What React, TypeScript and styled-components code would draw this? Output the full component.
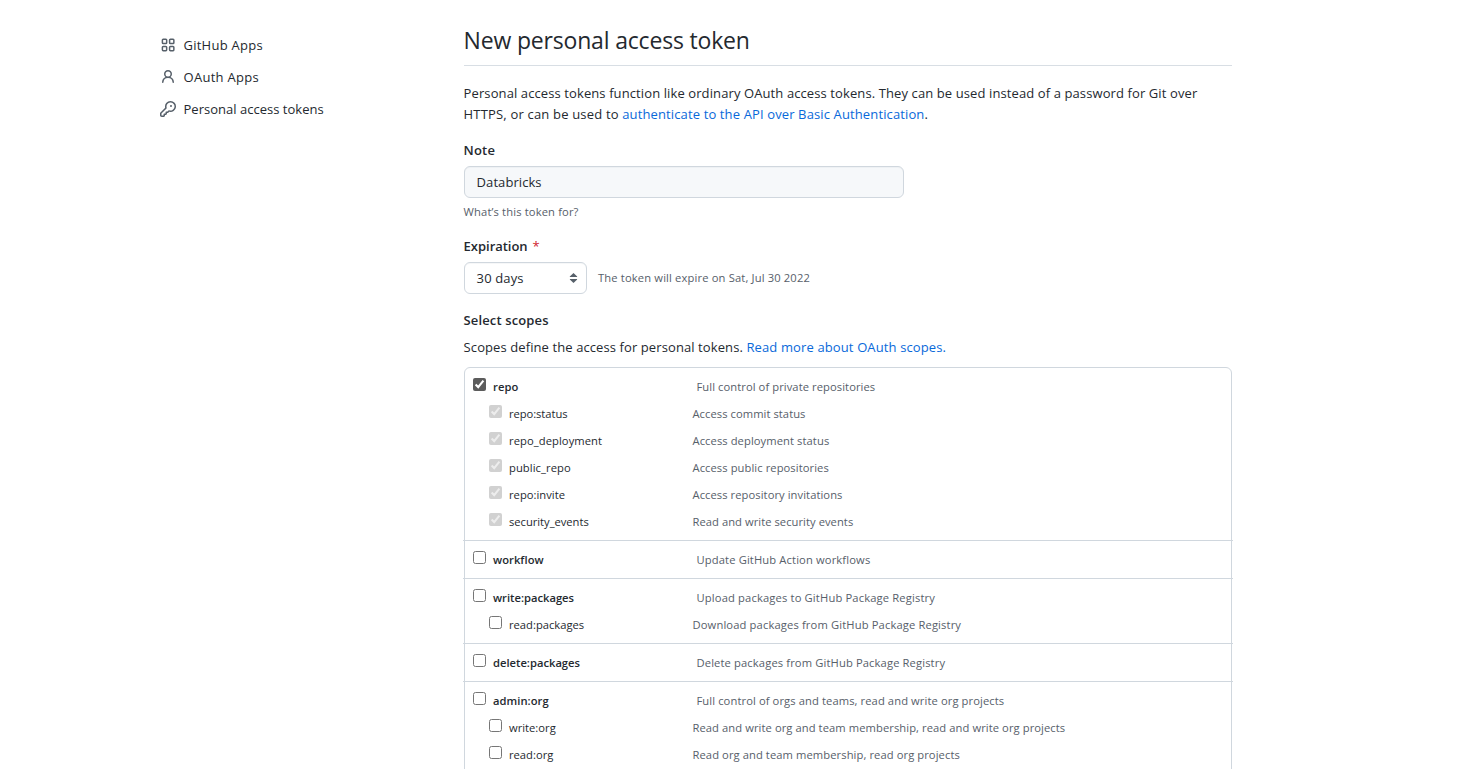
import React from "react";
import styled, { createGlobalStyle } from "styled-components";

const GlobalStyle = createGlobalStyle`
  * { box-sizing: border-box; }
  html, body { margin: 0; overflow: hidden; }
  body {
    background: #fff;
    color: #24292f;
    font-family: "Open Sans", "Noto Sans", sans-serif;
    font-size: 13px;
    line-height: 21px;
  }
`;

const Page = styled.div`
  display: flex;
  height: 769px;
  padding-left: 160px;
  overflow: hidden;
`;

const Sidebar = styled.nav`
  display: flex;
  flex-direction: column;
  width: 303.6px;
  padding-top: 29px;
`;

const NavLink = styled.a`
  display: flex;
  align-items: center;
  gap: 7.5px;
  height: 32px;
  color: #24292f;
  text-decoration: none;
`;

const Icon = styled.svg`
  flex: none;
  width: 16px;
  height: 16px;
  fill: #57606a;
`;

const OutlineIcon = styled(Icon)`
  fill: none;
  stroke: #57606a;
  stroke-width: 1.5px;
`;

const Text = styled.span<{ $track?: number }>`
  letter-spacing: ${(p) => p.$track ?? 0}px;
  white-space: nowrap;
`;

const Main = styled.main`
  width: 768px;
  flex: none;
`;

const Title = styled.h1`
  height: 66px;
  margin: 0 0 17px;
  padding-top: 23px;
  border-bottom: 1px solid #d8dee4;
  font-size: 23px;
  font-weight: 400;
  line-height: 34px;
  letter-spacing: -0.18px;
`;

const Paragraph = styled.p`
  margin: 0;
`;

const Link = styled.a<{ $track?: number }>`
  color: #0969da;
  letter-spacing: ${(p) => p.$track ?? 0}px;
  text-decoration: none;
`;

const Label = styled.label<{ $track?: number; $top: number }>`
  display: block;
  margin-top: ${(p) => p.$top}px;
  font-weight: 600;
  letter-spacing: ${(p) => p.$track ?? 0}px;
`;

const Required = styled.span`
  margin-left: 5px;
  color: #cf222e;
  font-weight: 400;
`;

const Field = styled.input`
  display: block;
  width: 440px;
  height: 32px;
  margin-top: 5px;
  padding: 5px 12px;
  border: 1px solid #d0d7de;
  border-radius: 6px;
  outline: none;
  background: #f6f8fa;
  box-shadow: inset 0 1px 0 rgba(208, 215, 222, 0.2);
  color: #24292f;
  font: inherit;
  line-height: 20px;
  letter-spacing: 0.069px;
`;

const Hint = styled.div<{ $track?: number }>`
  color: #57606a;
  font-size: 11.2px;
  line-height: 18px;
  letter-spacing: ${(p) => p.$track ?? 0}px;
`;

const NoteHint = styled(Hint)`
  margin-top: 5px;
`;

const ExpiryRow = styled.div`
  display: flex;
  align-items: center;
  gap: 11.4px;
  margin-top: 5px;
`;

const Select = styled.button`
  display: flex;
  align-items: center;
  justify-content: space-between;
  width: 123px;
  height: 32px;
  padding: 0 7.6px 0 12px;
  border: 1px solid #d0d7de;
  border-radius: 6px;
  background: #fff;
  box-shadow: inset 0 1px 0 rgba(208, 215, 222, 0.2);
  color: #24292f;
  font: inherit;
`;

const ScopeIntro = styled(Paragraph)`
  margin-top: 6px;
`;

const ScopeBox = styled.div`
  height: 460px;
  margin-top: 9px;
  border: 1px solid #d0d7de;
  border-radius: 6px;
`;

const ScopeGroup = styled.section`
  margin: 0 -2px;
  padding: 5px 2px;

  & + & { border-top: 1px solid #d0d7de; }
`;

const ScopeRow = styled.label<{ $child?: boolean }>`
  display: grid;
  grid-template-columns: ${(p) => (p.$child ? "20.4px 183.5px" : "20.4px 203.5px")} 1fr;
  height: 27px;
  padding-left: ${(p) => (p.$child ? 24 : 8)}px;
  font-size: 11.2px;
  line-height: 27px;
`;

const Checkbox = styled.input`
  width: 13px;
  height: 13px;
  margin: 5px 0 0;
  accent-color: #5c5c5c;
`;

const ScopeName = styled.span<{ $strong?: boolean; $track: number }>`
  font-weight: ${(p) => (p.$strong ? 600 : 400)};
  letter-spacing: ${(p) => p.$track}px;
`;

const ScopeDescription = styled.span<{ $track: number }>`
  color: #57606a;
  letter-spacing: ${(p) => p.$track}px;
  white-space: nowrap;
`;

type Scope = {
  name: string;
  nameTrack: number;
  text: string;
  textTrack: number;
  checked?: boolean;
  disabled?: boolean;
};

const scope = (
  name: string,
  nameTrack: number,
  text: string,
  textTrack: number,
  state: Pick<Scope, "checked" | "disabled"> = {},
): Scope => ({ name, nameTrack, text, textTrack, ...state });

const inherited = { checked: true, disabled: true };

const groups: Scope[][] = [
  [
    scope("repo", 0.1, "Full control of private repositories", 0.075, { checked: true }),
    scope("repo:status", -0.053, "Access commit status", 0.056, inherited),
    scope("repo_deployment", 0.08, "Access deployment status", 0.08, inherited),
    scope("public_repo", 0.08, "Access public repositories", 0.075, inherited),
    scope("repo:invite", 0.024, "Access repository invitations", 0.067, inherited),
    scope("security_events", -0.02, "Read and write security events", 0.05, inherited),
  ],
  [scope("workflow", 0.05, "Update GitHub Action workflows", 0.13)],
  [
    scope("write:packages", 0, "Upload packages to GitHub Package Registry", 0.15),
    scope("read:packages", 0.01, "Download packages from GitHub Package Registry", 0.135),
  ],
  [scope("delete:packages", 0.006, "Delete packages from GitHub Package Registry", 0.125)],
  [
    scope("admin:org", 0.05, "Full control of orgs and teams, read and write org projects", 0.097),
    scope("write:org", 0.01, "Read and write org and team membership, read and write org projects", 0.078),
    scope("read:org", 0.01, "Read org and team membership, read org projects", 0.085),
  ],
];

const AppsIcon = () => (
  <OutlineIcon viewBox="0 0 16 16">
    <rect x="2.4" y="2.3" width="4.25" height="4.25" rx="0.8" />
    <rect x="9.6" y="2.3" width="4.25" height="4.25" rx="0.8" />
    <rect x="2.4" y="9.4" width="4.25" height="4.25" rx="0.8" />
    <rect x="9.6" y="9.4" width="4.25" height="4.25" rx="0.8" />
  </OutlineIcon>
);

const PersonIcon = () => (
  <Icon viewBox="0 0 16 16">
    <path
      fillRule="evenodd"
      d="M10.5 5a2.5 2.5 0 11-5 0 2.5 2.5 0 015 0zm.061 3.073a4 4 0 10-5.123 0 6.004 6.004 0 00-3.431 5.142.75.75 0 001.498.07 4.5 4.5 0 018.99 0 .75.75 0 101.498-.07 6.005 6.005 0 00-3.432-5.142z"
    />
  </Icon>
);

const KeyIcon = () => (
  <Icon viewBox="0 0 16 16">
    <path
      fillRule="evenodd"
      d="M6.5 5.5a4 4 0 112.731 3.795.75.75 0 00-.768.18L7.44 10.5H6.25a.75.75 0 00-.75.75v1.19l-.06.06H4.25a.75.75 0 00-.75.75v1.19l-.06.06H1.75a.25.25 0 01-.25-.25v-1.69l5.024-5.023a.75.75 0 00.181-.768A3.995 3.995 0 016.5 5.5zm4-5.5a5.5 5.5 0 00-5.348 6.788L.22 11.72a.75.75 0 00-.22.53v2C0 15.216.784 16 1.75 16h2a.75.75 0 00.53-.22l.5-.5a.75.75 0 00.22-.53V14h.75a.75.75 0 00.53-.22l.5-.5a.75.75 0 00.22-.53V12h.75a.75.75 0 00.53-.22l.932-.932A5.5 5.5 0 1010.5 0zm.5 6a1 1 0 100-2 1 1 0 000 2z"
    />
  </Icon>
);

const SelectArrows = () => (
  <svg width="9" height="10" viewBox="0 0 9 10" fill="#57606a">
    <path d="M4.5 0 8.2 3.6Q8.5 4 8 4H1Q.5 4 .8 3.6ZM4.5 10 .8 6.4Q.5 6 1 6H8Q8.5 6 8.2 6.4Z" />
  </svg>
);

export default function App() {
  return (
    <>
      <GlobalStyle />
      <Page>
        <Sidebar>
          <NavLink><AppsIcon /><Text $track={0.25}>GitHub Apps</Text></NavLink>
          <NavLink><PersonIcon /><Text $track={0.28}>OAuth Apps</Text></NavLink>
          <NavLink><KeyIcon /><Text $track={0.02}>Personal access tokens</Text></NavLink>
        </Sidebar>
        <Main>
          <Title>New personal access token</Title>
          <Paragraph>
            <Text $track={0.103}>
              Personal access tokens function like ordinary OAuth access tokens. They can be used instead of a password for Git over
            </Text>
            <br />
            <Text $track={0.18}>HTTPS, or can be used to </Text>
            <Link $track={0.125}>authenticate to the API over Basic Authentication</Link>.
          </Paragraph>
          <Label $top={15} $track={0.2}>Note</Label>
          <Field defaultValue="Databricks" />
          <NoteHint $track={0.137}>What’s this token for?</NoteHint>
          <Label $top={15} $track={-0.024}>Expiration<Required>*</Required></Label>
          <ExpiryRow>
            <Select type="button"><Text $track={0.125}>30 days</Text><SelectArrows /></Select>
            <Hint $track={0.147}>The token will expire on Sat, Jul 30 2022</Hint>
          </ExpiryRow>
          <Label as="div" $top={16} $track={0.126}>Select scopes</Label>
          <ScopeIntro>
            <Text $track={0.095}>Scopes define the access for personal tokens. </Text>
            <Link $track={0.125}>Read more about OAuth scopes.</Link>
          </ScopeIntro>
          <ScopeBox>
            {groups.map((group) => (
              <ScopeGroup key={group[0].name}>
                {group.map((item, i) => (
                  <ScopeRow key={item.name} $child={i > 0}>
                    <Checkbox type="checkbox" defaultChecked={item.checked} disabled={item.disabled} />
                    <ScopeName $strong={i === 0} $track={item.nameTrack}>{item.name}</ScopeName>
                    <ScopeDescription $track={item.textTrack}>{item.text}</ScopeDescription>
                  </ScopeRow>
                ))}
              </ScopeGroup>
            ))}
          </ScopeBox>
        </Main>
      </Page>
    </>
  );
}
